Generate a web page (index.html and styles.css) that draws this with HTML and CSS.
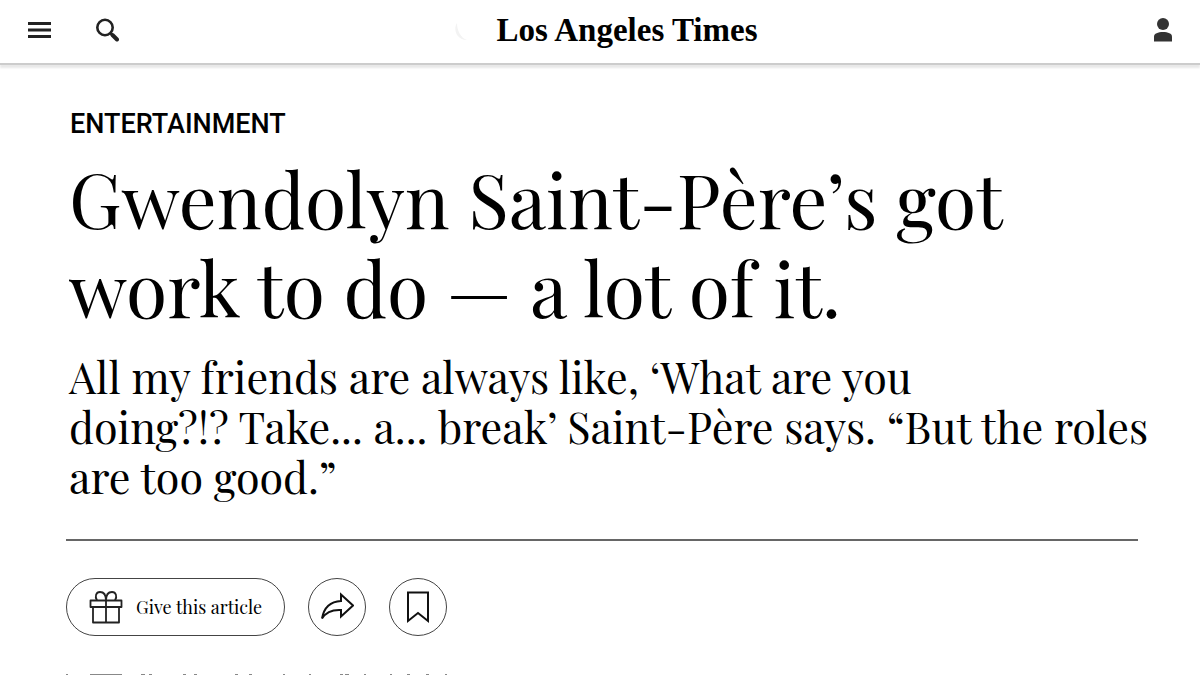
FILE: index.html
```
<!DOCTYPE html>
<html lang="en">

<head>
    <meta charset="UTF-8">
    <meta name="viewport" content="width=device-width, initial-scale=1.0">
    <title>Los Angeles Times</title>
    <link rel="stylesheet" href="styles.css">
</head>

<body>
    <header class="site-header">
        <nav class="header-nav">
            <button class="icon-btn" aria-label="Menu">
                <svg width="24" height="24" viewBox="0 0 24 24" fill="#222">
                    <path d="M1 4h23v3H1zM1 10.500h23v3H1zM1 17h23v3H1z" />
                </svg>
            </button>
            <button class="icon-btn" aria-label="Search">
                <svg width="24" height="24" viewBox="0 0 24 24" fill="none" stroke="#222">
                    <circle cx="10" cy="9.500" r="7.700" stroke-width="2.600" />
                    <path d="M15.500 15l1.500 1.500" stroke-width="3" />
                    <path d="M17.500 17l4.500 4.500" stroke-width="4" stroke-linecap="round" />
                </svg>
            </button>
        </nav>
        <a class="masthead" href="#">
            <svg width="14" height="20" viewBox="0 0 14 20">
                <path d="M2 3C-2 9 1 20 12 20 6 18 2 11 2 3z" fill="#f3f3f3" />
            </svg>
            Los Angeles Times
        </a>
        <button class="icon-btn account" aria-label="Account">
            <svg width="24" height="24" viewBox="0 0 24 24" fill="#333">
                <circle cx="12" cy="6" r="6" />
                <path d="M3 23.500v-5c0-3 4-4.500 9-4.500s9 1.500 9 4.500v5z" />
            </svg>
        </button>
    </header>

    <main class="article">
        <a class="section-label" href="#">ENTERTAINMENT</a>
        <h1>Gwendolyn Saint-Père’s got<br>work to do — a lot of it.</h1>
        <p class="subhead">All my friends are always like, ‘What are you<br>doing?!? Take... a... break’ Saint-Père says. “But the roles<br>are too good.”</p>

        <div class="actions">
            <button class="action-btn gift-btn">
                <svg width="34" height="34" viewBox="0 0 34 34" fill="none" stroke="#222" stroke-width="1.800" stroke-linejoin="round">
                    <path d="M1.500 10.500h31v6.500h-31zM4 17v15.500h26V17M17 10.500v22" />
                    <path d="M17 10.500c0-4-1.500-8.500-6-8.500-4 0-5.500 4.500-3 8.500M17 10.500c0-4 1.500-8.500 6-8.500 4 0 5.500 4.500 3 8.500" />
                </svg>
                Give this article
            </button>
            <button class="action-btn round-btn" aria-label="Share">
                <svg width="34" height="34" viewBox="0 0 34 34" fill="none" stroke="#111" stroke-width="2" stroke-linejoin="miter">
                    <path d="M21 4.500L33 15.500 21 26.500V20C12 19.500 6 22 2 28.500 4 17.500 10 11.500 21 11z" />
                </svg>
            </button>
            <button class="action-btn round-btn" aria-label="Save">
                <svg width="34" height="34" viewBox="0 0 34 34" fill="none" stroke="#111" stroke-width="2">
                    <path d="M7 2.500h20v28.500l-10-8-10 8z" />
                </svg>
            </button>
        </div>

        <!-- top edge of the next row -->
        <svg class="next-row" width="384" height="1" viewBox="0 0 384 1" fill="#888">
            <path d="M0 0h2v1h-2zM24 0h32v1h-32zM75 0h4v1h-4zM83 0h3v1h-3zM117 0h3v1h-3zM128 0h3v1h-3zM169 0h3v1h-3zM183 0h3v1h-3zM217 0h2v1h-2zM243 0h2v1h-2zM274 0h3v1h-3zM279 0h4v1h-4zM298 0h2v1h-2zM324 0h2v1h-2zM341 0h3v1h-3zM360 0h3v1h-3zM379 0h2v1h-2z" />
        </svg>
    </main>
</body>

</html>
```
FILE: styles.css
```
body {
    margin: 0;
    background-color: #fff;
    color: #000;
    font-family: "Playfair Display", "Liberation Serif", serif;
}

button {
    padding: 0;
    background: none;
    color: inherit;
    font-family: inherit;
    cursor: pointer;
}

a {
    color: inherit;
    text-decoration: none;
}

svg {
    display: block;
}

.site-header {
    display: grid;
    grid-template-columns: 1fr auto 1fr;
    align-items: center;
    height: 60px;
    padding: 0 25px 3px 27px;
    border-bottom: 2px solid #ccc;
    box-shadow: 0 3px 2px #e8e8e8;
}

.header-nav {
    display: flex;
    gap: 44px;
}

.icon-btn {
    border: none;
}

.account {
    justify-self: end;
}

.masthead {
    display: flex;
    align-items: center;
    gap: 28px;
    padding-left: 10px;
    font-family: "Old English Text MT", "Liberation Serif", serif;
    font-size: 33px;
    font-weight: bold;
    line-height: 40px;
}

.article {
    padding: 43px 62px 0 66px;
}

.section-label {
    display: block;
    padding-left: 4px;
    font-family: Roboto, sans-serif;
    font-size: 27px;
    font-weight: 500;
    line-height: 32px;
}

h1 {
    margin: 14px 0 0;
    padding-left: 3px;
    font-size: 75px;
    font-weight: normal;
    line-height: 89px;
}

.subhead {
    margin: 19px 0 0;
    padding: 0 0 38px 3px;
    border-bottom: 2px solid #666;
    font-size: 43px;
    line-height: 50px;
    white-space: nowrap;
}

.actions {
    display: flex;
    gap: 23px;
    margin-top: 37px;
}

.action-btn {
    display: flex;
    align-items: center;
    justify-content: center;
    height: 58px;
    border: 1px solid #444;
    border-radius: 29px;
}

.gift-btn {
    gap: 13px;
    padding: 0 22px;
    font-size: 18px;
}

.round-btn {
    width: 58px;
}

.next-row {
    margin-top: 38px;
}
```
